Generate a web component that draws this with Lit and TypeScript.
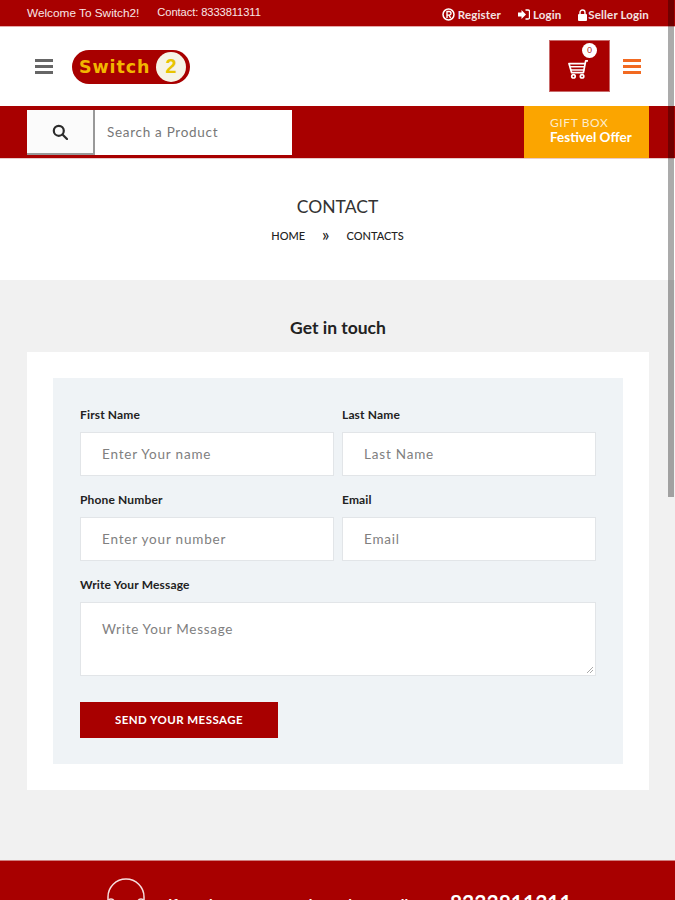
import { LitElement, html, css } from 'lit';
import { customElement } from 'lit/decorators.js';

@customElement('app-root')
export class AppRoot extends LitElement {
  static styles = css`
    :host {
      --red: #a80000;
      display: block;
      position: relative;
      height: 900px;
      overflow: hidden;
      background: #fff;
      font-family: 'Lato', 'Noto Sans', sans-serif;
      color: #222;
    }
    * { box-sizing: border-box; }

    .topbar {
      height: 27px;
      background: var(--red);
      border-bottom: 1px solid #e6a8a8;
      padding: 0 26px 0 27px;
      display: flex;
      align-items: center;
      justify-content: space-between;
      color: #fff;
    }
    .welcome {
      display: flex;
      gap: 18px;
      font-family: 'Liberation Sans', sans-serif;
      color: #f8e6e6;
    }
    .welcome .hello { font-size: 11.8px; }
    .welcome .phone { font-size: 11.2px; letter-spacing: -0.1px; }
    .toplinks {
      display: flex;
      gap: 17px;
      padding-top: 3px;
      font-weight: 700;
      font-size: 11.5px;
      letter-spacing: 0.15px;
      color: #f3e3e3;
    }
    .toplinks span { display: flex; align-items: center; gap: 3px; }
    .toplinks span.tight { gap: 1px; }

    .header {
      height: 79px;
      display: flex;
      align-items: center;
      padding: 0 34px 0 35px;
    }
    .burger { display: flex; flex-direction: column; gap: 3px; width: 18px; }
    .burger i { display: block; height: 3px; background: #666; }
    .burger.orange { margin-left: 13px; }
    .burger.orange i { background: #f26a21; }
    .logo {
      margin-left: 19px;
      width: 118px;
      height: 34px;
      border-radius: 17px;
      background: var(--red);
      display: flex;
      align-items: center;
      justify-content: space-between;
      padding: 0 4px 0 7px;
    }
    .logo b {
      font-family: 'DejaVu Sans', sans-serif;
      font-size: 17.5px;
      font-weight: 700;
      letter-spacing: 0.9px;
      color: #f2b600;
    }
    .logo em {
      width: 30px;
      height: 30px;
      border-radius: 50%;
      background: #f6f3e6;
      color: #e8c400;
      font: 700 20px 'Liberation Sans', sans-serif;
      display: flex;
      align-items: center;
      justify-content: center;
    }
    .spacer { flex: 1; }
    .cart {
      position: relative;
      width: 61px;
      height: 52px;
      margin-top: -1px;
      background: var(--red);
      border: 1px solid #c96a6a;
      display: flex;
      align-items: center;
      justify-content: center;
    }
    .cart svg { margin-top: 6px; margin-left: -4px; }
    .count {
      position: absolute;
      top: 2px;
      left: 32px;
      width: 15px;
      height: 15px;
      border-radius: 50%;
      background: #fff;
      color: #a80000;
      font-size: 8px;
      line-height: 15px;
      text-align: center;
    }

    .searchband {
      height: 53px;
      background: var(--red);
      padding: 0 26px 0 27px;
      display: flex;
      align-items: stretch;
      justify-content: space-between;
      border-bottom: 1px solid #e8caca;
    }
    .search { display: flex; width: 265px; margin: 4px 0 3px; background: #fff; }
    .search-btn {
      width: 68px;
      background: #fbfbfb;
      border-right: 2px solid #999;
      border-bottom: 2px solid #999;
      display: flex;
      align-items: center;
      justify-content: center;
    }
    .search-text {
      padding: 0 0 2px 12px;
      display: flex;
      align-items: center;
      font-size: 13.5px;
      letter-spacing: 0.7px;
      color: #777;
    }
    .gift {
      width: 125px;
      background: #fba500;
      color: #fff;
      padding: 9px 0 0 26px;
      line-height: 15px;
    }
    .gift div { font-size: 12px; letter-spacing: 0.6px; color: #fdeccb; }
    .gift strong { font-size: 13.5px; font-weight: 700; display: block; }

    .crumbs {
      height: 121px;
      padding-top: 36px;
      text-align: center;
    }
    .crumbs h1 { margin: 0; font-size: 17.5px; font-weight: 400; line-height: 24px; color: #333; }
    .trail {
      margin-top: 8px;
      display: flex;
      justify-content: center;
      align-items: center;
      gap: 17px;
      font-size: 11px;
      font-weight: 500;
      line-height: 18px;
      color: #222;
    }
    .trail .sep { font-size: 17px; line-height: 14px; margin-top: -3px; }

    .content {
      height: 580px;
      background: #f1f1f1;
      padding: 37px 26px 0 27px;
    }
    .content h2 {
      margin: 0 0 14px;
      height: 21px;
      font-size: 17.5px;
      line-height: 21px;
      font-weight: 700;
      text-align: center;
      color: #222;
    }
    .card { background: #fff; padding: 26px; height: 438px; }
    .panel { background: #eff3f6; height: 386px; padding: 30px 27px 0; }
    .form {
      display: grid;
      grid-template-columns: 254px 254px;
      column-gap: 8px;
    }
    .field { display: flex; flex-direction: column; margin-bottom: 17px; }
    .field.wide { grid-column: 1 / 3; margin-bottom: 26px; }
    label {
      font-size: 12px;
      font-weight: 700;
      letter-spacing: 0.15px;
      line-height: 14px;
      margin-bottom: 10px;
      color: #222;
    }
    .input {
      height: 44px;
      background: #fff;
      border: 1px solid #e2e5e8;
      padding: 0 0 0 21px;
      display: flex;
      align-items: center;
      font-size: 13.5px;
      letter-spacing: 0.8px;
      color: #808080;
    }
    .input.area {
      position: relative;
      height: 74px;
      align-items: flex-start;
      padding-top: 18px;
      line-height: 17px;
      letter-spacing: 0.7px;
    }
    .grip { position: absolute; right: 1px; bottom: 1px; }
    .send {
      width: 198px;
      height: 36px;
      padding-bottom: 2px;
      background: var(--red);
      color: #fff;
      display: flex;
      align-items: center;
      justify-content: center;
      font-size: 11.5px;
      font-weight: 700;
      letter-spacing: 0.45px;
    }

    .footer {
      height: 60px;
      background: var(--red);
      border-top: 1px solid #cf7f7f;
      color: #fff;
      display: flex;
      padding: 17px 0 0 106px;
    }
    .footer svg { flex: none; }
    .footer p {
      margin: 11px 0 0 22px;
      display: flex;
      align-items: baseline;
      font-size: 15px;
      font-weight: 700;
      white-space: nowrap;
    }
    .footer .phone { font-size: 21px; margin-left: 23px; }

    .scrollbar {
      position: absolute;
      top: 0;
      left: 668px;
      width: 6px;
      height: 497px;
      background: rgba(0, 0, 0, 0.33);
    }
  `;

  render() {
    return html`
      <div class="topbar">
        <div class="welcome"><span class="hello">Welcome To Switch2!</span><span class="phone">Contact: 8333811311</span></div>
        <div class="toplinks">
          <span>
            <svg width="13" height="13" viewBox="0 0 13 13"><circle cx="6.5" cy="6.5" r="5.5" fill="none" stroke="#fff" stroke-width="1.5"/><path d="M5 10V3.5h2.200a1.700 1.700 0 0 1 0 3.600H5M7 7l1.600 3" fill="none" stroke="#fff" stroke-width="1.400"/></svg>
            Register
          </span>
          <span>
            <svg width="12" height="11" viewBox="0 0 12 11"><path d="M0 3.500h3.500V1L8 5.500 3.500 10V7.500H0z" fill="#fff"/><path d="M7.500 1h2.500a1.500 1.500 0 0 1 1.500 1.500v6A1.500 1.500 0 0 1 10 10H7.500" fill="none" stroke="#fff" stroke-width="1.300"/></svg>
            Login
          </span>
          <span class="tight">
            <svg width="9" height="12" viewBox="0 0 9 12"><rect x="0" y="5" width="9" height="7" rx="1" fill="#fff"/><path d="M2 5.500V3.500a2.500 2.500 0 0 1 5 0v2" fill="none" stroke="#fff" stroke-width="1.400"/></svg>
            Seller Login
          </span>
        </div>
      </div>

      <div class="header">
        <div class="burger"><i></i><i></i><i></i></div>
        <div class="logo"><b>Switch</b><em>2</em></div>
        <div class="spacer"></div>
        <div class="cart">
          <svg width="22" height="19" viewBox="0 0 24 21" fill="none" stroke="#fff" stroke-width="1.900" stroke-linejoin="round">
            <path d="M23 1h-2.500L18 14H5L2 4h17.500"/>
            <path d="M3 7.500h16M4 11h15" stroke-width="1.500"/>
            <circle cx="7" cy="18" r="1.900"/>
            <circle cx="16.500" cy="18" r="1.900"/>
          </svg>
          <span class="count">0</span>
        </div>
        <div class="burger orange"><i></i><i></i><i></i></div>
      </div>

      <div class="searchband">
        <div class="search">
          <div class="search-btn">
            <svg width="16" height="16" viewBox="0 0 16 16" fill="none" stroke="#2b2b2b" stroke-width="2.200"><circle cx="6.800" cy="6.800" r="5"/><path d="M10.500 10.500L15 15" stroke-linecap="round"/></svg>
          </div>
          <div class="search-text">Search a Product</div>
        </div>
        <div class="gift"><div>GIFT BOX</div><strong>Festivel Offer</strong></div>
      </div>

      <div class="crumbs">
        <h1>CONTACT</h1>
        <div class="trail"><span>HOME</span><span class="sep">»</span><span>CONTACTS</span></div>
      </div>

      <div class="content">
        <h2>Get in touch</h2>
        <div class="card">
          <div class="panel">
            <div class="form">
              <div class="field"><label>First Name</label><div class="input">Enter Your name</div></div>
              <div class="field"><label>Last Name</label><div class="input">Last Name</div></div>
              <div class="field"><label>Phone Number</label><div class="input">Enter your number</div></div>
              <div class="field"><label>Email</label><div class="input">Email</div></div>
              <div class="field wide">
                <label>Write Your Message</label>
                <div class="input area">
                  Write Your Message
                  <svg class="grip" width="8" height="8" viewBox="0 0 8 8" stroke="#aaa" stroke-width="1"><path d="M7 1L1 7M7 4L4 7"/></svg>
                </div>
              </div>
            </div>
            <div class="send">SEND YOUR MESSAGE</div>
          </div>
        </div>
      </div>

      <div class="footer">
        <svg width="40" height="44" viewBox="0 0 40 44" fill="none" stroke="#f6dede" stroke-width="1.500">
          <path d="M2 22V19a18 18 0 0 1 36 0v3"/>
          <circle cx="5" cy="24" r="3"/>
          <circle cx="35" cy="24" r="3"/>
        </svg>
        <p>If you have any questions please call us<span class="phone">8333811311</span></p>
      </div>

      <div class="scrollbar"></div>
    `;
  }
}
